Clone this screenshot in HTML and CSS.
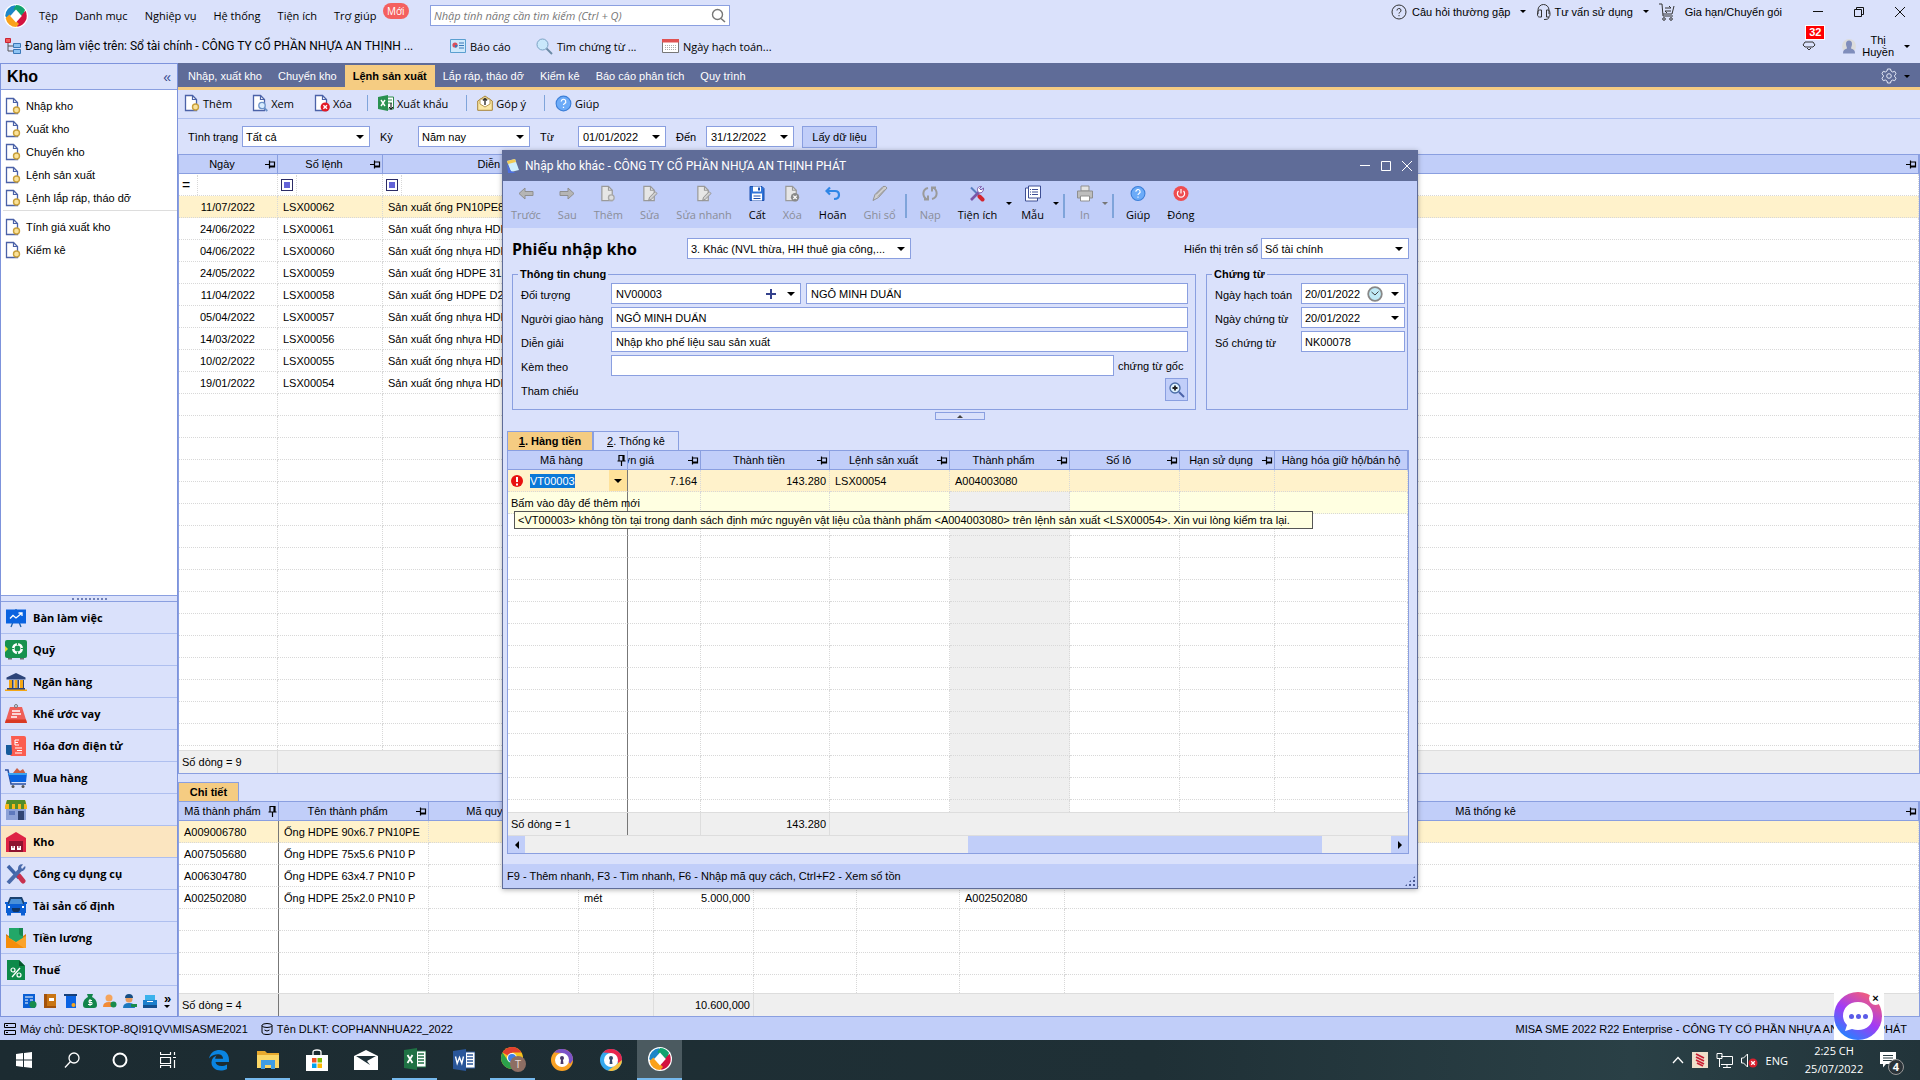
FILE: index.html
```
<!DOCTYPE html>
<html lang="vi">
<head>
    <meta charset="utf-8">
    <title>MISA SME 2022</title>
    <link rel="stylesheet" href="styles.css">
</head>
<body>

<!-- shared icons -->
<svg class="defs" width="0" height="0">
    <symbol id="doc" viewBox="0 0 16 18">
        <path d="M1.5 1.5h7l4 4v11h-11z" fill="#fff" stroke="#4b62a8" stroke-width="1.3"/>
        <path d="M8.5 1.5v4h4" fill="none" stroke="#4b62a8" stroke-width="1.2"/>
    </symbol>
    <symbol id="doc-new" viewBox="0 0 16 18">
        <use href="#doc" width="16" height="18"/>
        <circle cx="11.5" cy="13" r="3" fill="#fbe39a" stroke="#c9a03c" stroke-width="1.4"/>
    </symbol>
    <symbol id="doc-view" viewBox="0 0 16 18">
        <use href="#doc" width="16" height="18"/>
        <circle cx="10" cy="11.5" r="3.2" fill="#d8ecff" stroke="#6d93c9" stroke-width="1.3"/>
        <path d="M12.3 14l3 3" stroke="#6d93c9" stroke-width="1.8"/>
    </symbol>
    <symbol id="doc-del" viewBox="0 0 16 18">
        <use href="#doc" width="16" height="18"/>
        <circle cx="11.2" cy="13" r="4.6" fill="#e21a26"/>
        <path d="M9.4 11.2l3.6 3.6m0-3.6l-3.6 3.6" stroke="#fff" stroke-width="1.4"/>
    </symbol>
    <symbol id="gdoc" viewBox="0 0 16 18">
        <path d="M1.5 1.5h7l4 4v11h-11z" fill="#e6e6e6" stroke="#9a9a9a" stroke-width="1.3"/>
        <path d="M8.5 1.5v4h4" fill="none" stroke="#9a9a9a" stroke-width="1.2"/>
    </symbol>
    <symbol id="gdoc-new" viewBox="0 0 16 18">
        <use href="#gdoc" width="16" height="18"/>
        <circle cx="11.5" cy="13.4" r="3" fill="#ddd" stroke="#a8a8a8" stroke-width="1.4"/>
    </symbol>
    <symbol id="gdoc-edit" viewBox="0 0 16 18">
        <use href="#gdoc" width="16" height="18"/>
        <path d="M6.5 16.5l1-3.5 6-6 2 2-6 6z" fill="#d0d0d0" stroke="#909090"/>
    </symbol>
    <symbol id="gdoc-del" viewBox="0 0 16 18">
        <use href="#gdoc" width="16" height="18"/>
        <circle cx="11.2" cy="13" r="4.4" fill="#8a8a8a"/>
        <path d="M9.4 11.2l3.6 3.6m0-3.6l-3.6 3.6" stroke="#fff" stroke-width="1.3"/>
    </symbol>
    <symbol id="pin" viewBox="0 0 11 9">
        <path d="M0 4.5h4M4.5 0.5v8M4.5 2h5v5h-5M4.5 6h5" fill="none" stroke="#000" stroke-width="1.2"/>
    </symbol>
    <symbol id="pin-on" viewBox="0 0 9 12">
        <path d="M4.5 12V7M0.5 7h8M2 7V1.5h5V7M6 1.5V7" fill="none" stroke="#000" stroke-width="1.2"/>
    </symbol>
    <symbol id="help" viewBox="0 0 18 18">
        <circle cx="9" cy="9" r="7.8" fill="#6cabf8" stroke="#3c7fd8" stroke-width="1.2"/>
        <path d="M6.6 7a2.4 2.4 0 1 1 3.6 2c-.9.5-1.2.8-1.2 1.7M9 12.4v1.3" fill="none" stroke="#fff" stroke-width="1.3"/>
    </symbol>
    <symbol id="misa" viewBox="0 0 24 24">
        <circle cx="12" cy="12" r="12" fill="#fff"/>
        <path d="M11 1.2A11 11 0 0 0 1.2 12l3.6 4.6L14 5z" fill="#1d86c8"/>
        <path d="M12 1a11 11 0 0 1 9 4.8L18.5 14 9.5 5z" fill="#12a36f"/>
        <path d="M21.5 6.8a11 11 0 0 1-8 16L10.5 19z" fill="#d3123f"/>
        <path d="M1.6 14a11 11 0 0 0 10.600 9L15 20 5.500 10.500z" fill="#f9a11b"/>
        <path d="M12 5.500L17.800 12 12 18.500 6.200 12z" fill="#fff"/>
    </symbol>
</svg>

<div class="desktop">

<header class="app-header">
    <div class="menu-row">
        <svg class="logo" viewBox="0 0 24 24"><use href="#misa"/></svg>
        <nav class="menu">
            <a href="#">Tệp</a>
            <a href="#">Danh mục</a>
            <a href="#">Nghiệp vụ</a>
            <a href="#">Hệ thống</a>
            <a href="#">Tiện ích</a>
            <a href="#">Trợ giúp<span class="new-badge">Mới</span></a>
        </nav>
        <div class="search">
            <input type="text" aria-label="Tìm kiếm" placeholder="Nhập tính năng cần tìm kiếm (Ctrl + Q)">
            <svg width="15" height="15" viewBox="0 0 15 15"><circle cx="6.500" cy="6.500" r="5" fill="none" stroke="#777" stroke-width="1.400"/><path d="M10 10.500l4 3.500" stroke="#777" stroke-width="1.600"/></svg>
        </div>
        <div class="header-right">
            <a href="#"><svg width="16" height="16" viewBox="0 0 16 16" fill="none" stroke="#333"><circle cx="8" cy="8" r="7"/><path d="M6 6.500a2 2 0 1 1 2.800 1.800c-.6.300-.8.600-.8 1.300M8 11v1.200"/></svg> Câu hỏi thường gặp</a>
            <i class="caret"></i>
            <a href="#" class="support"><svg width="16" height="16" viewBox="0 0 16 16" fill="none" stroke="#333"><path d="M2 10V6a5 5 0 0 1 11 0v4M5.500 6v7h-2c-1.500 0-2-1-2-3s.5-4 2-4zM10.500 6v7h1.500c1.500 0 2-1 2-3s-.5-4-2-4zM13 13c0 2-2 2.500-5 2.500"/></svg>Tư vấn sử dụng</a>
            <i class="caret"></i>
            <a href="#" class="cart"><svg width="16" height="18" viewBox="0 0 16 18" fill="none" stroke="#333"><path d="M0 1h3l1 12h10M4 11h9l2-8M6 5h6M6 8h6M10 3l2 2M8 10L6 8"/><circle cx="5" cy="16" r="1.300"/><circle cx="12" cy="16" r="1.300"/></svg>Gia hạn/Chuyển gói</a>
            <div class="win-btns">
                <button aria-label="Thu nhỏ"><svg width="12" height="12" stroke="#111" fill="none"><path d="M1 5.500h10"/></svg></button>
                <button aria-label="Khôi phục"><svg width="12" height="12" stroke="#111" fill="none"><path d="M1.500 3.500h7v7h-7zM3.500 3V1.500h7v7H9"/></svg></button>
                <button aria-label="Đóng"><svg width="12" height="12" stroke="#111" fill="none"><path d="M1 1l10 10M11 1L1 11"/></svg></button>
            </div>
        </div>
    </div>
    <div class="quick-row">
        <div class="working">
            <svg width="16" height="16" viewBox="0 0 16 16"><path d="M3 5v8h5M3 8h5" fill="none" stroke="#555"/><path d="M.5.500h5v4h-5z" fill="#ef5a5a" stroke="#c23"/><path d="M8.500 5.500h7v4h-7zM8.500 11.500h7v4h-7z" fill="#8fc4f3" stroke="#3b78b8"/></svg>
            Đang làm việc trên: Sổ tài chính - CÔNG TY CỔ PHẦN NHỰA AN THỊNH ...
        </div>
        <a href="#" class="q1"><svg width="16" height="16" viewBox="0 0 16 16"><path d="M.5 1.500h15v13H.5z" fill="#cfe8fb" stroke="#5a9fd0"/><circle cx="5" cy="7" r="2.600" fill="#d84f5c"/><path d="M5 7h2.600A2.600 2.600 0 0 1 5 9.600z" fill="#3b78b8"/><path d="M9 5h5M9 7.500h5M9 10h5" stroke="#3b78b8"/></svg>Báo cáo</a>
        <a href="#" class="q2"><svg width="17" height="17" viewBox="0 0 17 17"><circle cx="6.500" cy="6.500" r="5.500" fill="#c9e8fb" stroke="#7ba2c4"/><path d="M10.500 10.500l5.500 5.500" stroke="#6c8ba6" stroke-width="2"/></svg>Tìm chứng từ ...</a>
        <a href="#" class="q3"><svg width="17" height="16" viewBox="0 0 17 16"><path d="M.5 1.500h16v13H.5z" fill="#fff" stroke="#777"/><path d="M0 1h17v3.500H0z" fill="#e05252"/><path d="M3 7.500h11M3 9.500h11M3 11.500h11" stroke="#aaa" stroke-dasharray="1 1"/></svg>Ngày hạch toán...</a>
        <div class="user">
            <div class="bell">
                <span class="bell-count">32</span>
                <svg width="14" height="14" viewBox="0 0 14 14" fill="none" stroke="#333"><path d="M1 6l2-3h8l2 3-2 2H3zM5 9l2 2 2-2"/></svg>
            </div>
            <svg width="14" height="17" viewBox="0 0 14 17"><circle cx="7" cy="8" r="7" fill="#dcdcdc"/><path d="M4 6a3 3.500 0 0 1 6 0c0 2-1 3-1 4.500 3 1 4 2 4 5H1c0-3 1-4 4-5C5 9 4 8 4 6z" fill="#7f8dbb"/></svg>
            <span class="user-name">Thị<br>Huyền</span>
            <i class="caret"></i>
        </div>
    </div>
</header>

<div class="workspace">
    <aside class="sidebar">
        <div class="side-title"><h2>Kho</h2><button aria-label="Thu gọn">«</button></div>
        <div class="side-links">
            <a href="#"><svg width="16" height="18"><use href="#doc-new"/></svg>Nhập kho</a>
            <a href="#"><svg width="16" height="18"><use href="#doc-new"/></svg>Xuất kho</a>
            <a href="#"><svg width="16" height="18"><use href="#doc-new"/></svg>Chuyển kho</a>
            <a href="#"><svg width="16" height="18"><use href="#doc-new"/></svg>Lệnh sản xuất</a>
            <a href="#"><svg width="16" height="18"><use href="#doc-new"/></svg>Lệnh lắp ráp, tháo dỡ</a>
            <hr>
            <a href="#"><svg width="16" height="18"><use href="#doc-new"/></svg>Tính giá xuất kho</a>
            <a href="#"><svg width="16" height="18"><use href="#doc-new"/></svg>Kiểm kê</a>
        </div>
        <div class="splitter"><i></i></div>
        <nav class="modules">
            <a href="#"><svg viewBox="0 0 22 20"><path d="M8 14l-2 5M14 14l2 5M11 1v2" stroke="#1e5fa8" stroke-width="1.300"/><path d="M1 1.500h20v14H1z" fill="#0a63e0"/><path d="M5 10.500l3-3 3 2.500 6-5M13.500 5H17v3" fill="none" stroke="#fff" stroke-width="1.300"/></svg>Bàn làm việc</a>
            <a href="#"><svg viewBox="0 0 22 20"><path d="M3 17h4v2.500H3zM15 17h4v2.500h-4z" fill="#68716d"/><rect width="22" height="18" rx="2" fill="#17924f"/><path d="M0 6l3 3-3 3z" fill="#e8e339"/><circle cx="12.500" cy="8.500" r="4.200" fill="none" stroke="#fff" stroke-width="2.600"/><path d="M12.500 2v3M12.500 12v3M6 8.500h3M16 8.500h3" stroke="#17924f" stroke-width="1.200"/></svg>Quỹ</a>
            <a href="#"><svg viewBox="0 0 22 20"><path d="M11 1l9.500 4.500v2h-19v-2z" fill="#2c4479"/><path d="M4 8h3v9H4zM9.500 8h3v9h-3zM15 8h3v9h-3z" fill="#f5a714"/><path d="M7 8h1.500v9H7zM12.500 8H14v9h-1.500zM18 8h1v9h-1zM2 16h18v2H2z" fill="#2c4479"/><path d="M0 17.500h22V19H0z" fill="#f5a714"/></svg>Ngân hàng</a>
            <a href="#"><svg viewBox="0 0 22 20"><path d="M5 3h12l5 16H0z" fill="#ef5f59"/><path d="M1 15.500h20l1 3.500H0z" fill="#d93a24"/><circle cx="11" cy="2" r="1.500" fill="none" stroke="#777"/><path d="M7 7h8M7 10h9M6 13h6" stroke="#fff" stroke-width="1.700"/></svg>Khế ước vay</a>
            <a href="#"><svg viewBox="0 0 22 20"><path d="M1 9h6v10H3q-2 0-2-2z" fill="#165c9c"/><path d="M6 0h13q2 0 2 2v18H5q2-1 2-3z" fill="#fb5d4f"/><path d="M10 4h4M10 4v5M10 6.500h3M10 9h4M10 12h7M12 14.500h5M10 17h7" stroke="#fff"/></svg>Hóa đơn điện tử</a>
            <a href="#"><svg viewBox="0 0 22 20"><path d="M8 5l4-5 3 3 3-2 3 5z" fill="#ca6045"/><path d="M0 2h3l3 14h15" fill="none" stroke="#294fa0" stroke-width="1.500"/><path d="M3 5h19l-1 9H6z" fill="#0a63e0"/><path d="M3 5h19v2H4z" fill="#3ba3ee"/><circle cx="8" cy="18.500" r="1.500" fill="#555"/><circle cx="18" cy="18.500" r="1.500" fill="#555"/></svg>Mua hàng</a>
            <a href="#"><svg viewBox="0 0 22 20"><path d="M1 8h20v12H1z" fill="#8da2d7"/><path d="M13 11h6v9h-6z" fill="#304472"/><path d="M4 11h6v4H4z" fill="#5e79bd"/><path d="M2 0h18l2 6v3H0V6z" fill="#f6b61c"/><path d="M2 0h18l1 4H1z" fill="#538d28"/><path d="M4 4h3v5H4zM10 4h3v5h-3zM16 4h3v5h-3z" fill="#538d28"/></svg>Bán hàng</a>
            <a href="#" class="on"><svg viewBox="0 0 22 20"><path d="M11 0l10 6v14H1V6z" fill="#de2345"/><path d="M4 9h14v11H4z" fill="#8d132f"/><path d="M6 14h4v4H6zM12 14h4v4h-4z" fill="#fff"/><path d="M7.500 14h1v2h-1zM13.500 14h1v2h-1z" fill="#8d132f"/></svg>Kho</a>
            <a href="#"><svg viewBox="0 0 22 20"><path d="M3 2l11 12" stroke="#3f63a8" stroke-width="3.500"/><path d="M14 12l4 5" stroke="#c8304e" stroke-width="5" stroke-linecap="round"/><path d="M3 19L16 5" stroke="#4a6bab" stroke-width="4"/><path d="M20 2l-3 3-1-2 2-2.500c-4-1-6 3-4.500 5.500 2 2.500 7 1 7-3z" fill="#4a6bab"/></svg>Công cụ dụng cụ</a>
            <a href="#"><svg viewBox="0 0 22 20"><path d="M5 1h12l3 7H2z" fill="#1b416f"/><path d="M6 3h10l2 5H4z" fill="#4a90d8"/><path d="M1 8h20v9H1zM2 17h4v2.500H2zM16 17h4v2.500h-4z" fill="#0b5fd4"/><path d="M7 12h8v2q-1 2-2 2H9q-1 0-2-2z" fill="#123563"/><path d="M0 6h3v2H0zM19 6h3v2h-3z" fill="#0b5fd4"/><path d="M3 11h2M17 11h2" stroke="#fff" stroke-width="2"/></svg>Tài sản cố định</a>
            <a href="#"><svg viewBox="0 0 22 20"><path d="M1 6l10 7 10-7v14H1z" fill="#d77b12"/><path d="M4 0h14v11l-7 4-7-4z" fill="#22a768"/><path d="M14 0h4v8q-4 0-4-3z" fill="#17874f"/><path d="M1 20V8l10 6 10-6v12z" fill="#fba32b"/><path d="M1 8l18 12H1z" fill="#f58d0a"/></svg>Tiền lương</a>
            <a href="#"><svg viewBox="0 0 22 20"><path d="M2 0h12l6 6v14H2z" fill="#0d8a49"/><path d="M14 0v6h6z" fill="#06582d"/><path d="M7 17l8-9" stroke="#fff" stroke-width="1.300"/><circle cx="8" cy="10" r="2" fill="none" stroke="#fff" stroke-width="1.200"/><circle cx="14" cy="15" r="2" fill="none" stroke="#fff" stroke-width="1.200"/></svg>Thuế</a>
        </nav>
        <div class="module-tray">
            <svg viewBox="0 0 14 14"><path d="M0 0h12v14H0z" fill="#0b5fd4"/><path d="M2 3h8M2 6h3M7 6h3M2 9h3" stroke="#fff"/><circle cx="10" cy="10.500" r="3.500" fill="#188c4c"/></svg>
            <svg viewBox="0 0 14 14"><path d="M1 0h12v14H1z" fill="#a3520d"/><path d="M4 0h9v12H4z" fill="#c97514"/><path d="M6 4h5v3H6z" fill="#fff"/></svg>
            <svg viewBox="0 0 14 14"><path d="M1 0h13v2H1z" fill="#163f7a"/><path d="M3 2h10v12H3z" fill="#0b63e3"/><circle cx="10.500" cy="11" r="2" fill="#f8a61e"/></svg>
            <svg viewBox="0 0 14 14"><path d="M4 0h6L9 3c4 2 5 5 5 8q0 3-3 3H3q-3 0-3-3c0-3 1-6 5-8z" fill="#12854b"/><path d="M9 6.500H6v2h3v2H5M7 5v7" fill="none" stroke="#fff"/></svg>
            <svg viewBox="0 0 14 14"><circle cx="6" cy="4" r="3.500" fill="#f5a45b"/><path d="M0 13q0-5 6-5t6 5z" fill="#f28a35"/><circle cx="10.500" cy="10.500" r="3" fill="#188c4c"/></svg>
            <svg viewBox="0 0 14 14"><circle cx="6" cy="5" r="3.500" fill="#e99b5c"/><path d="M2 4q0-4 4-4t4 4z" fill="#174f86"/><path d="M0 14q0-5 6-5t6 5z" fill="#1d78be"/><path d="M8 10h6v3H8z" fill="#188c4c"/></svg>
            <svg viewBox="0 0 14 14"><path d="M2 1h10v6H2z" fill="#3cb2ec"/><path d="M0 6h14v5H0z" fill="#1c7ecb"/><path d="M0 11h14v3H0z" fill="#134f8f"/><path d="M4 7.500h6" stroke="#fff"/></svg>
            <span class="more">»<i class="caret"></i></span>
        </div>
    </aside>

    <main class="content">
        <nav class="tabs">
            <a href="#">Nhập, xuất kho</a>
            <a href="#">Chuyển kho</a>
            <a href="#" class="active">Lệnh sản xuất</a>
            <a href="#">Lắp ráp, tháo dỡ</a>
            <a href="#">Kiểm kê</a>
            <a href="#">Báo cáo phân tích</a>
            <a href="#">Quy trình</a>
            <button class="gear" aria-label="Tùy chọn"><svg width="16" height="16" viewBox="0 0 16 16" fill="none" stroke="#e4e8f6"><path d="M6.500 1h3l.5 2 1.700 1 2-.700 1.400 2.500L13.700 7.200v1.600l1.400 1.400-1.400 2.500-2-.700-1.700 1-.5 2h-3L6 13l-1.700-1-2 .700L.9 10.200l1.400-1.400V7.200L.9 5.800l1.400-2.500 2 .700L6 3z"/><circle cx="8" cy="8" r="2.300"/></svg><i class="caret"></i></button>
        </nav>
        <div class="toolbar">
            <button><svg width="16" height="18"><use href="#doc-new"/></svg>Thêm</button>
            <button><svg width="16" height="18"><use href="#doc-view"/></svg>Xem</button>
            <button><svg width="16" height="18"><use href="#doc-del"/></svg>Xóa</button>
            <i class="sep"></i>
            <button><svg width="16" height="16" viewBox="0 0 16 16"><path d="M8 2h7.500v12H8z" fill="#fff" stroke="#2c8a4c"/><path d="M10 5h4M10 8h4" stroke="#2c8a4c"/><path d="M0 2l10-2v16L0 14z" fill="#2a9150"/><path d="M3 5l4 6M7 5l-4 6" stroke="#fff" stroke-width="1.400"/><path d="M13 8v6m-2-2l2 2.500 2-2.500" fill="none" stroke="#000"/></svg>Xuất khẩu</button>
            <i class="sep"></i>
            <button><svg width="16" height="16" viewBox="0 0 16 16"><path d="M.7 6L8 1l7.300 5v9.300H.7z" fill="#fbe8a6" stroke="#a8853b"/><path d="M3 4h10v5l-5 3-5-3z" fill="#fff" stroke="#b99b55"/><path d="M8 10V3.500M6 5.500l2-2 2 2" fill="none" stroke="#333" stroke-width="1.400"/></svg>Góp ý</button>
            <i class="sep"></i>
            <button><svg width="17" height="17"><use href="#help"/></svg>Giúp</button>
        </div>
        <form class="filters">
            <label class="f-status" for="status">Tình trạng</label>
            <span class="field sel w-status"><select id="status"><option>Tất cả</option></select></span>
            <label class="f-period" for="period">Kỳ</label>
            <span class="field sel w-period"><select id="period"><option>Năm nay</option></select></span>
            <label class="f-from" for="from">Từ</label>
            <span class="field sel w-date"><input id="from" type="text" value="01/01/2022"></span>
            <label class="f-to" for="to">Đến</label>
            <span class="field sel w-date"><input id="to" type="text" value="31/12/2022"></span>
            <button type="button" class="load">Lấy dữ liệu</button>
        </form>

        <section class="grid master">
            <div class="grid-rows">
                <table data-fill="25">
                    <colgroup><col class="c99"><col class="c105"><col class="c245"><col></colgroup>
                    <thead><tr>
                        <th><span class="th">Ngày<svg width="11" height="9"><use href="#pin"/></svg></span></th>
                        <th><span class="th">Số lệnh<svg width="11" height="9"><use href="#pin"/></svg></span></th>
                        <th><span class="th">Diễn giải<svg width="11" height="9"><use href="#pin"/></svg></span></th>
                        <th><span class="th"><svg width="11" height="9"><use href="#pin"/></svg></span></th>
                    </tr></thead>
                    <tbody>
                        <tr class="filter-row"><td><i class="op eq">=</i></td><td><i class="op"><b></b></i></td><td><i class="op"><b></b></i></td><td></td></tr>
                        <tr class="selected"><td class="date">11/07/2022</td><td>LSX00062</td><td>Sản xuất ống PN10PE80</td><td></td></tr>
                        <tr><td class="date">24/06/2022</td><td>LSX00061</td><td>Sản xuất ống nhựa HDPE</td><td></td></tr>
                        <tr><td class="date">04/06/2022</td><td>LSX00060</td><td>Sản xuất ống nhựa HDPE</td><td></td></tr>
                        <tr><td class="date">24/05/2022</td><td>LSX00059</td><td>Sản xuất ống HDPE 315</td><td></td></tr>
                        <tr><td class="date">11/04/2022</td><td>LSX00058</td><td>Sản xuất ống HDPE D25</td><td></td></tr>
                        <tr><td class="date">05/04/2022</td><td>LSX00057</td><td>Sản xuất ống nhựa HDPE</td><td></td></tr>
                        <tr><td class="date">14/03/2022</td><td>LSX00056</td><td>Sản xuất ống nhựa HDPE</td><td></td></tr>
                        <tr><td class="date">10/02/2022</td><td>LSX00055</td><td>Sản xuất ống nhựa HDPE</td><td></td></tr>
                        <tr><td class="date">19/01/2022</td><td>LSX00054</td><td>Sản xuất ống nhựa HDPE</td><td></td></tr>
                    </tbody>
                </table>
            </div>
            <div class="grid-foot"><span class="c99">Số dòng = 9</span><span></span></div>
        </section>

        <section class="detail">
            <div class="detail-tabs"><button>Chi tiết</button></div>
            <div class="grid">
                <div class="grid-rows">
                    <table class="frozen" data-fill="8">
                        <colgroup><col class="c100"><col class="c150"><col class="c150"><col class="c75"><col class="c100"><col class="c103"><col class="c103"><col class="c105"><col></colgroup>
                        <thead><tr>
                            <th><span class="th">Mã thành phẩm<svg width="9" height="12"><use href="#pin-on"/></svg></span></th>
                            <th><span class="th">Tên thành phẩm<svg width="11" height="9"><use href="#pin"/></svg></span></th>
                            <th><span class="th">Mã quy cách<svg width="11" height="9"><use href="#pin"/></svg></span></th>
                            <th></th><th></th><th></th><th></th><th></th>
                            <th><span class="th">Mã thống kê<svg width="11" height="9"><use href="#pin"/></svg></span></th>
                        </tr></thead>
                        <tbody>
                            <tr class="selected"><td>A009006780</td><td>Ống HDPE 90x6.7 PN10PE</td><td></td><td></td><td></td><td></td><td></td><td></td><td></td></tr>
                            <tr><td>A007505680</td><td>Ống HDPE 75x5.6 PN10 P</td><td></td><td></td><td></td><td></td><td></td><td></td><td></td></tr>
                            <tr><td>A006304780</td><td>Ống HDPE 63x4.7 PN10 P</td><td></td><td></td><td></td><td></td><td></td><td></td><td></td></tr>
                            <tr><td>A002502080</td><td>Ống HDPE 25x2.0 PN10 P</td><td></td><td>mét</td><td class="num">5.000,000</td><td></td><td></td><td>A002502080</td><td></td></tr>
                        </tbody>
                    </table>
                </div>
                <div class="grid-foot"><span class="c100 frozen-edge">Số dòng = 4</span><span class="c375"></span><span class="c100 num">10.600,000</span><span></span></div>
            </div>
        </section>
    </main>
</div>

<footer class="statusbar">
    <svg width="12" height="12" fill="none" stroke="#000"><path d="M.5.500h11v4H.5zM.5 7.500h11v4H.5zM2 2.500h2M2 9.500h2"/></svg>
    <span>Máy chủ: DESKTOP-8QI91QV\MISASME2021</span>
    <svg class="db" width="12" height="12" fill="none" stroke="#000"><ellipse cx="6" cy="2.500" rx="5" ry="2"/><path d="M1 2.500V9q0 2.500 5 2.500T11 9V2.500M3.500 7q2.500 2 5 0"/></svg>
    <span>Tên DLKT: COPHANNHUA22_2022</span>
    <span class="edition">MISA SME 2022 R22 Enterprise - CÔNG TY CỔ PHẦN NHỰA AN THỊNH PHÁT</span>
</footer>

<div class="taskbar">
    <div class="tasks">
        <button aria-label="Start"><svg width="16" height="16" fill="#fff"><path d="M0 2l7-1v6.500H0zM8 1l8-1v7.500H8zM0 8.500h7V15l-7-1zM8 8.500h8V16l-8-1z"/></svg></button>
        <button aria-label="Search"><svg width="16" height="16" fill="none" stroke="#fff" stroke-width="1.300"><circle cx="10" cy="6" r="5"/><path d="M6.500 9.500L1 15.500"/></svg></button>
        <button aria-label="Cortana"><svg width="16" height="16" fill="none" stroke="#fff" stroke-width="2"><circle cx="8" cy="8" r="6.500"/></svg></button>
        <button aria-label="Task view"><svg width="17" height="16" fill="none" stroke="#fff"><path d="M.5 0v2.500h10V0M.5 5.500h10v6H.500zM.5 16v-2.500h10V16M14.500 0v3M14.500 8v8M13 5.500h3" stroke-width="1.200"/></svg></button>
        <button aria-label="Edge" class="wide"><svg width="22" height="22" viewBox="0 0 22 22"><path d="M1 9.500C2.500 3 7 1 11.500 1 17.500 1 21 5 21 11v2H7.500c.5 4 6.500 5.500 11.500 2.500v4.500C11 24 3 20 3.500 13 3.700 9.500 6 7.500 8.500 6.500 7.500 8 7.300 8.800 7.200 9.700H15c0-6-9.500-5.500-14-.2z" fill="#0a84e0"/></svg></button>
        <button aria-label="Explorer" class="wide open"><svg width="22" height="19" viewBox="0 0 22 19"><path d="M0 1h8l2 2h12v15H0z" fill="#e8a92e"/><path d="M0 5h22v13H0z" fill="#fbd767"/><path d="M4 10h14v9h-4v-4H8v4H4z" fill="#3f9de4"/></svg></button>
        <button aria-label="Store" class="wide"><svg width="24" height="22" viewBox="0 0 24 22"><path d="M8 7V3q0-2 4-2t4 2v4" fill="none" stroke="#fff" stroke-width="1.300"/><path d="M1 6h22v16H1z" fill="#fff"/><path d="M7 9h4.500v4.500H7z" fill="#f05024"/><path d="M12.500 9H17v4.500h-4.500z" fill="#7fb900"/><path d="M7 14.500h4.500V19H7z" fill="#00a3ee"/><path d="M12.500 14.500H17V19h-4.500z" fill="#feb800"/></svg></button>
        <button aria-label="Mail" class="wide"><svg width="24" height="20" viewBox="0 0 24 20"><path d="M0 6l12-6 12 6v14H0z" fill="#fff"/><path d="M2 6h20l-9 5 3 4z" fill="#1f3138"/></svg></button>
        <button aria-label="Excel" class="wide open"><svg width="22" height="22" viewBox="0 0 22 22"><path d="M12 3h10v16H12z" fill="#fff" stroke="#1f7244"/><path d="M14 6h6M14 9h6M14 12h6M14 15h6" stroke="#1f7244" stroke-width="1.500"/><path d="M0 2l13-2v22L0 20z" fill="#1f7244"/><path d="M3.500 7l5 8M8.500 7l-5 8" stroke="#fff" stroke-width="1.800"/></svg></button>
        <button aria-label="Word" class="wide"><svg width="22" height="22" viewBox="0 0 22 22"><path d="M12 3h10v16H12z" fill="#fff" stroke="#2a5699"/><path d="M14 6h6M14 9h6M14 12h6M14 15h6" stroke="#2a5699" stroke-width="1.500"/><path d="M0 2l13-2v22L0 20z" fill="#2a5699"/><path d="M2.500 7.500l1.700 7 2.300-6 2.300 6 1.700-7" fill="none" stroke="#fff" stroke-width="1.400"/></svg></button>
        <button aria-label="Chrome" class="wide open"><svg width="26" height="26" viewBox="0 0 26 26"><circle cx="12" cy="12" r="11" fill="#f6c21c"/><path d="M12 12L2.500 6.500A11 11 0 0 1 21.500 6.500H12z" fill="#e2402f"/><path d="M2.500 6.500A11 11 0 0 0 12 23l4-8-8.500-1z" fill="#2ba24c"/><circle cx="12" cy="12" r="5" fill="#fff"/><circle cx="12" cy="12" r="4" fill="#3e7fe8"/><circle cx="18" cy="18" r="8" fill="#8d6e63"/><text x="18" y="22" font-size="11" text-anchor="middle" fill="#e8dcd8">T</text></svg></button>
        <button aria-label="Coc Coc" class="wide"><svg width="22" height="22" viewBox="0 0 22 22"><circle cx="11" cy="11" r="11" fill="#f9a224"/><path d="M3 3.500A11 11 0 0 1 22 11l-3 4L11 4z" fill="#7b53c8"/><circle cx="11" cy="11" r="7" fill="#fff"/><path d="M9 9a2 2 0 1 1 4 0q0 1-1 2l.5 4h-3l.5-4q-1-1-1-2z" fill="#4a3a6b"/></svg></button>
        <button aria-label="Browser" class="wide"><svg width="22" height="22" viewBox="0 0 22 22"><circle cx="11" cy="11" r="11" fill="#34a8ee"/><path d="M3 3.500A11 11 0 0 1 22 11l-3 4L11 4z" fill="#e8274c"/><path d="M22 11a11 11 0 0 1-14 10.500L17 15z" fill="#f9c03c"/><circle cx="11" cy="11" r="7" fill="#fff"/><path d="M9 9a2 2 0 1 1 4 0q0 1-1 2l.5 4h-3l.5-4q-1-1-1-2z" fill="#33486b"/></svg></button>
        <button aria-label="MISA" class="wide open current"><svg width="24" height="24"><use href="#misa"/></svg></button>
    </div>
    <div class="tray">
        <svg width="12" height="8" fill="none" stroke="#fff" stroke-width="1.300"><path d="M1 7l5-5.500L11 7"/></svg>
        <svg width="16" height="16"><path d="M0 0h16v16H0z" fill="#f0dfcb"/><path d="M4 2l8 4M4 5l8 4M4 8l8 4M5 11l6 3" stroke="#c81e34" stroke-width="1.800"/></svg>
        <svg width="17" height="15" fill="none" stroke="#fff"><path d="M5 3.500h11.500v8H5M3.500 7v7M1 .5h5v5H1zM3.500 5.500v1.500M7 14.500h8M11 12v2"/></svg>
        <svg width="17" height="15" viewBox="0 0 17 15"><path d="M.5 5h2l4-4v13l-4-4h-2z" fill="none" stroke="#fff"/><circle cx="12" cy="10" r="4.500" fill="#d9202e"/><path d="M10.200 8.200l3.600 3.600m0-3.600l-3.600 3.600" stroke="#fff" stroke-width="1.300"/></svg>
        <span class="lang">ENG</span>
        <span class="clock">2:25 CH<br>25/07/2022</span>
        <div class="notif">
            <svg width="16" height="16"><path d="M0 0h16v12H6l-3 3.500V12H0z" fill="#fff"/><path d="M3 3.500h10M3 6h10M3 8.500h10" stroke="#263a40"/></svg>
            <span>4</span>
        </div>
    </div>
</div>

<!-- chat bubble -->
<div class="chat">
    <svg width="48" height="48" viewBox="0 0 48 48">
        <defs><linearGradient id="cg" x1="0.200" y1="1" x2="0.800" y2="0"><stop offset="0" stop-color="#168bff"/><stop offset=".5" stop-color="#a23af5"/><stop offset="1" stop-color="#ff6369"/></linearGradient></defs>
        <circle cx="24" cy="24" r="24" fill="url(#cg)"/>
        <path d="M24 10c9 0 15 6 15 14s-6 14-15 14q-3 0-6-1l-7 2 2-6q-4-4-4-9c0-8 6-14 15-14z" fill="#fff"/>
        <circle cx="17.500" cy="24.500" r="2.500" fill="#5a5be8"/><circle cx="24.500" cy="24.500" r="2.500" fill="#5a5be8"/><circle cx="31.500" cy="24.500" r="2.500" fill="#5a5be8"/>
    </svg>
    <button aria-label="Đóng">×</button>
</div>

<!-- voucher window -->
<div class="window">
    <div class="win-title">
        <svg width="16" height="16" viewBox="0 0 16 16"><path d="M2 3l8-2 4 11-8 2z" fill="#cfeefc"/><path d="M2 3l8-2 1 3-8 2z" fill="#f2cb55"/><path d="M2 6l1 9 8 0-5-2z" fill="#4d6fe0"/></svg>
        <span>Nhập kho khác - CÔNG TY CỔ PHẦN NHỰA AN THỊNH PHÁT</span>
        <div class="win-title-btns">
            <button aria-label="Thu nhỏ"><svg width="12" height="12" stroke="#fff" fill="none"><path d="M1 5.500h10"/></svg></button>
            <button aria-label="Phóng to"><svg width="12" height="12" stroke="#fff" fill="none"><path d="M1.500 1.500h9v9h-9z"/></svg></button>
            <button aria-label="Đóng"><svg width="12" height="12" stroke="#fff" fill="none"><path d="M1 1l10 10M11 1L1 11"/></svg></button>
        </div>
    </div>
    <div class="win-tools">
        <button disabled><svg viewBox="0 0 16 16"><path d="M1 8l6-5.500V6h8v4H7v3.500z" fill="#b5b5b5" stroke="#8f8f8f"/></svg>Trước</button>
        <button disabled><svg viewBox="0 0 16 16"><path d="M15 8L9 2.500V6H1v4h8v3.500z" fill="#b5b5b5" stroke="#8f8f8f"/></svg>Sau</button>
        <button disabled><svg><use href="#gdoc-new"/></svg>Thêm</button>
        <button disabled><svg><use href="#gdoc-edit"/></svg>Sửa</button>
        <button disabled><svg><use href="#gdoc-edit"/></svg>Sửa nhanh</button>
        <button><svg viewBox="0 0 16 16"><path d="M1 1h12l2 2v12H1z" fill="#2f74d8" stroke="#1b4fae"/><path d="M4 1h8v5H4zM3 8h10v7H3z" fill="#fff"/><path d="M9 2h2v3H9zM4.500 10h7v1h-7zM4.500 12.500h7v1h-7z" fill="#1b4fae"/></svg>Cất</button>
        <button disabled><svg><use href="#gdoc-del"/></svg>Xóa</button>
        <button><svg viewBox="0 0 16 16"><path d="M5 2L1.500 5.500 5 9M2 5.500h8q4 0 4 4t-5 4" fill="none" stroke="#2f86e6" stroke-width="2.200"/></svg>Hoãn</button>
        <button disabled><svg viewBox="0 0 16 16"><path d="M1 15l2-6 8-8q3-1 4 1.500L6.500 12z" fill="#cfcfcf" stroke="#949494"/><path d="M4 9l7-7M6 11l7-7" stroke="#949494"/></svg>Ghi sổ</button>
        <i class="sep"></i>
        <button disabled><svg viewBox="0 0 16 16" fill="none" stroke="#9a9a9a" stroke-width="2"><path d="M6 2.500C0 4 0 11 5 14M10 13.500C16 12 16 5 11 2M2 14h4v-4M14 2h-4v4"/></svg>Nạp</button>
        <button><svg viewBox="0 0 16 16"><path d="M2 2l8 8" stroke="#5b7fc0" stroke-width="2"/><path d="M2 14.500l8-8" stroke="#7a57a8" stroke-width="2.600"/><path d="M14.500 2.500L12 4.500 10.500 3l2-2c-3-.500-5 2-3.500 5s6 1 5.500-3.500z" fill="#fff" stroke="#7a57a8"/><path d="M10.500 11l3 3" stroke="#d3252f" stroke-width="4" stroke-linecap="round"/></svg>Tiện ích</button>
        <i class="caret"></i>
        <button><svg viewBox="0 0 16 16" stroke="#3e4f94"><path d="M.5 2.500h12v13H.5z" fill="#fff"/><path d="M3.500.500h12v12h-12z" fill="#fff"/><path d="M5 4h1M7 4h6M5 6.500h1M7 6.500h6M5 9h1M7 9h6" stroke-width="1"/></svg>Mẫu</button>
        <i class="caret"></i>
        <i class="sep tight"></i>
        <button disabled><svg viewBox="0 0 16 16" stroke="#8f8f8f"><path d="M4 .500h8v5H4z" fill="#e4e4e4"/><path d="M.5 5.500h15v7H.5z" fill="#bdbdbd"/><path d="M3.500 10.500h9v5h-9z" fill="#fff"/></svg>In</button>
        <i class="caret off"></i>
        <i class="sep tight"></i>
        <button><svg viewBox="0 0 18 18"><use href="#help"/></svg>Giúp</button>
        <button><svg viewBox="0 0 16 16"><circle cx="8" cy="8" r="7.500" fill="#ee4d50"/><path d="M5.500 5.500a3.600 3.600 0 1 0 5 0M8 3.500V8" fill="none" stroke="#fff" stroke-width="1.200"/></svg>Đóng</button>
    </div>

    <div class="win-body">
        <div class="voucher-head">
            <h1>Phiếu nhập kho</h1>
            <span class="field sel w-kind"><select aria-label="Loại phiếu"><option>3. Khác (NVL thừa, HH thuê gia công,...</option></select></span>
            <label class="push" for="book">Hiển thị trên sổ</label>
            <span class="field sel w-book"><select id="book"><option>Sổ tài chính</option></select></span>
        </div>
        <div class="groups">
            <fieldset class="general">
                <legend>Thông tin chung</legend>
                <div class="row">
                    <label for="obj">Đối tượng</label>
                    <span class="field sel w-obj"><input id="obj" type="text" value="NV00003"><button class="plus" aria-label="Thêm"></button></span>
                    <span class="field grow second"><input type="text" aria-label="Tên đối tượng" value="NGÔ MINH DUẨN"></span>
                </div>
                <div class="row">
                    <label for="person">Người giao hàng</label>
                    <span class="field grow"><input id="person" type="text" value="NGÔ MINH DUẨN"></span>
                </div>
                <div class="row">
                    <label for="desc">Diễn giải</label>
                    <span class="field grow"><input id="desc" type="text" value="Nhập kho phế liệu sau sản xuất"></span>
                </div>
                <div class="row">
                    <label for="attach">Kèm theo</label>
                    <span class="field grow"><input id="attach" type="text"></span>
                    <span class="suffix">chứng từ gốc</span>
                </div>
                <div class="row">
                    <span class="lbl">Tham chiếu</span>
                    <button class="lookup" aria-label="Chọn tham chiếu"><svg width="16" height="16"><circle cx="6" cy="6" r="5" fill="#dff2ff" stroke="#4b6ea8" stroke-width="1.300"/><path d="M6 3.500v5M3.500 6h5" stroke="#222" stroke-width="1.800"/><path d="M10 10l5 5" stroke="#4b62a8" stroke-width="2"/></svg></button>
                </div>
            </fieldset>
            <fieldset class="document">
                <legend>Chứng từ</legend>
                <div class="row"><label for="d1">Ngày hạch toán</label>
                    <span class="field sel grow"><input id="d1" type="text" value="20/01/2022"><svg class="clock-ic" width="16" height="16"><circle cx="8" cy="8" r="6.800" fill="#bfeaf6" stroke="#888" stroke-width="1.800"/><path d="M4.500 6L8 9l3.500-3.500" fill="none" stroke="#444"/></svg></span></div>
                <div class="row"><label for="d2">Ngày chứng từ</label><span class="field sel grow"><input id="d2" type="text" value="20/01/2022"></span></div>
                <div class="row"><label for="d3">Số chứng từ</label><span class="field grow"><input id="d3" type="text" value="NK00078"></span></div>
            </fieldset>
        </div>
        <button class="collapse" aria-label="Thu gọn"><i></i></button>

        <div class="win-tabs">
            <button class="active"><u>1</u>. Hàng tiền</button>
            <button><u>2</u>. Thống kê</button>
        </div>
        <div class="grid">
            <div class="grid-rows">
                <table class="frozen" data-fill="14" data-grey="4">
                    <colgroup><col class="c120"><col class="c73"><col class="c129"><col class="c120"><col class="c120"><col class="c110"><col class="c95"><col></colgroup>
                    <thead><tr>
                        <th><span class="th">Mã hàng<svg width="9" height="12"><use href="#pin-on"/></svg></span></th>
                        <th><span class="th cut">Đơn giá<svg width="11" height="9"><use href="#pin"/></svg></span></th>
                        <th><span class="th">Thành tiền<svg width="11" height="9"><use href="#pin"/></svg></span></th>
                        <th><span class="th">Lệnh sản xuất<svg width="11" height="9"><use href="#pin"/></svg></span></th>
                        <th><span class="th">Thành phẩm<svg width="11" height="9"><use href="#pin"/></svg></span></th>
                        <th><span class="th">Số lô<svg width="11" height="9"><use href="#pin"/></svg></span></th>
                        <th><span class="th">Hạn sử dụng<svg width="11" height="9"><use href="#pin"/></svg></span></th>
                        <th><span class="th full">Hàng hóa giữ hộ/bán hộ</span></th>
                    </tr></thead>
                    <tbody>
                        <tr class="selected">
                            <td class="editing"><div class="edit-cell">
                                <svg width="12" height="12"><circle cx="6" cy="6" r="6" fill="#e81010"/><path d="M6 2v5M6 8.500v2" stroke="#fff" stroke-width="2"/></svg>
                                <mark>VT00003</mark>
                                <button aria-label="Chọn mã hàng"><i class="caret"></i></button>
                            </div></td>
                            <td class="num">7.164</td><td class="num">143.280</td><td>LSX00054</td><td>A004003080</td><td></td><td></td><td></td>
                        </tr>
                        <tr class="new-row"><td class="hint">Bấm vào đây để thêm mới</td><td></td><td></td><td></td><td class="grey"></td><td></td><td></td><td></td></tr>
                    </tbody>
                </table>
                <div class="error-tip">&lt;VT00003&gt; không tồn tại trong danh sách định mức nguyên vật liệu của thành phẩm &lt;A004003080&gt; trên lệnh sản xuất &lt;LSX00054&gt;. Xin vui lòng kiểm tra lại.</div>
            </div>
            <div class="grid-foot"><span class="c120 frozen-edge">Số dòng = 1</span><span class="c73"></span><span class="c129 num">143.280</span><span></span></div>
            <div class="hscroll"><button class="left" aria-label="Trái"></button><div class="thumb"></div><button class="right" aria-label="Phải"></button></div>
        </div>
    </div>
    <div class="win-status">F9 - Thêm nhanh, F3 - Tìm nhanh, F6 - Nhập mã quy cách, Ctrl+F2 - Xem số tồn<i class="grip"></i></div>
</div>

</div>
<script src="script.js"></script>
</body>
</html>
```

FILE: styles.css
```
* {
    box-sizing: border-box;
}

body {
    margin: 0;
    font-family: "Liberation Sans", Arial, sans-serif;
    font-size: 11px;
    color: #000;
    background: #dae1fb;
}

a {
    color: inherit;
    text-decoration: none;
}

button, input, select {
    font: inherit;
    color: inherit;
    margin: 0;
    padding: 0;
    border: none;
    background: none;
}

svg {
    flex: none;
    display: block;
}

.defs {
    position: absolute;
}

.desktop {
    position: relative;
    display: flex;
    flex-direction: column;
    height: 100vh;
    overflow: hidden;
}

.caret {
    flex: none;
    border: 4px solid transparent;
    border-top-color: #000;
    border-bottom: none;
}

.caret.off {
    border-top-color: #777;
}

/* header */
.app-header {
    height: 63px;
}

.menu-row {
    display: flex;
    align-items: center;
    height: 31px;
    padding-left: 4px;
}

.logo {
    width: 24px;
    height: 24px;
}

.menu {
    display: flex;
    gap: 17px;
    margin-left: 11px;
    width: 391px;
    font-family: "Open Sans", sans-serif;
}

.menu a {
    position: relative;
}

.new-badge {
    position: absolute;
    left: 49px;
    top: -5px;
    padding: 0 4px;
    border-radius: 8px;
    background: #f4605f;
    color: #fff;
    font-size: 10px;
    line-height: 16px;
}

.search {
    display: flex;
    align-items: center;
    width: 300px;
    height: 21px;
    padding: 0 3px;
    border: 1px solid #8a9fe0;
    background: #fff;
}

.search input {
    flex: 1;
    min-width: 0;
    outline: none;
    font-style: italic;
    font-family: "Open Sans", sans-serif;
}

.search input::placeholder {
    color: #777;
}

.header-right {
    display: flex;
    align-items: center;
    margin-left: auto;
    padding: 0 14px 8px 0;
}

.header-right a {
    display: flex;
    align-items: center;
    gap: 5px;
    margin-left: 10px;
    white-space: nowrap;
}

.header-right > .caret {
    margin-left: 10px;
    border-width: 3px;
    border-bottom: none;
}

.header-right .support {
    gap: 2px;
}

.header-right .cart {
    gap: 10px;
}

.win-btns {
    display: flex;
    gap: 29px;
    margin-left: 30px;
}

.quick-row {
    display: flex;
    align-items: center;
    height: 30px;
    padding: 0 10px 0 5px;
    font-family: "Open Sans", sans-serif;
}

.quick-row a, .working {
    display: flex;
    align-items: center;
    gap: 4px;
    white-space: nowrap;
}

.working {
    width: 445px;
    font-family: Roboto, sans-serif;
    font-size: 12px;
}

.q1 { width: 86px; }
.q2 { width: 126px; }

.user {
    display: flex;
    align-items: center;
    margin-left: auto;
    font-family: "Liberation Sans", Arial, sans-serif;
}

.user .caret {
    border-width: 3px;
    border-bottom: none;
}

.bell {
    position: relative;
    margin-right: 26px;
}

.bell-count {
    position: absolute;
    left: 3px;
    top: -14px;
    padding: 0 3px;
    border: 1px solid #fff;
    background: #f00;
    color: #fff;
    font-weight: bold;
    line-height: 13px;
}

.user-name {
    margin: 0 10px 0 6px;
    text-align: center;
    line-height: 12px;
}

/* sidebar */
.workspace {
    flex: 1;
    display: flex;
    min-height: 0;
}

.sidebar {
    display: flex;
    flex-direction: column;
    width: 178px;
    border: 1px solid #7d93dc;
    background: #fff;
}

.side-title {
    display: flex;
    align-items: center;
    justify-content: space-between;
    height: 26px;
    padding: 0 6px;
    border-bottom: 1px solid #8a9fe0;
    background: #dae1fb;
}

.side-title h2 {
    margin: 0;
    font-size: 16px;
}

.side-title button {
    font-size: 14px;
    color: #35488c;
}

.side-links {
    flex: 1;
    padding-top: 4px;
}

.side-links a {
    display: flex;
    align-items: center;
    gap: 5px;
    height: 23px;
    padding-left: 4px;
}

.side-links hr {
    margin: 1px 0 4px 2px;
    border: none;
    border-top: 1px solid #ddd;
}

.splitter {
    display: flex;
    justify-content: center;
    align-items: center;
    height: 7px;
    border-top: 1px solid #8a9fe0;
    border-bottom: 1px solid #8a9fe0;
    background: #dae1fb;
}

.splitter i {
    width: 35px;
    border-top: 2px dotted #6f80b8;
}

.modules a {
    display: flex;
    align-items: center;
    gap: 6px;
    height: 32px;
    padding-left: 4px;
    border-bottom: 1px solid #aebfef;
    background: #dae1fb;
    font-family: "Open Sans", sans-serif;
    font-weight: bold;
}

.modules svg {
    width: 22px;
    height: 20px;
}

.modules a.on {
    background: #fbe5c0;
}

.module-tray {
    display: flex;
    align-items: center;
    gap: 6px;
    height: 30px;
    padding-left: 22px;
    background: #dae1fb;
}

.module-tray svg {
    width: 14px;
    height: 14px;
}

.more {
    margin-left: 1px;
    font-size: 13px;
    font-weight: bold;
    line-height: 8px;
}

.more .caret {
    display: block;
    width: 6px;
    margin-top: 2px;
    border-width: 3px;
    border-bottom: none;
}

/* content */
.content {
    flex: 1;
    display: flex;
    flex-direction: column;
    min-width: 0;
}

.tabs {
    display: flex;
    height: 27px;
    padding: 2px 10px 0 2px;
    border-bottom: 3px solid #f5cc82;
    background: #5f6c98;
    color: #fff;
}

.tabs a {
    padding: 0 8px;
    line-height: 23px;
    white-space: nowrap;
}

.tabs a.active {
    background: #f5cc82;
    color: #000;
    font-weight: bold;
}

.gear {
    display: flex;
    align-items: center;
    gap: 7px;
    margin-left: auto;
}

.gear .caret {
    border-width: 3px;
    border-bottom: none;
}

.toolbar {
    display: flex;
    align-items: center;
    height: 29px;
    padding: 0 0 2px 6px;
    border-bottom: 1px solid #aebfef;
    font-family: "Open Sans", sans-serif;
}

.toolbar button {
    display: flex;
    align-items: center;
    gap: 3px;
    margin-right: 20px;
}

.sep {
    width: 1px;
    height: 16px;
    background: #7fa4da;
}

.toolbar .sep {
    margin: 0 10px 0 -5px;
    border-left: 1px solid #7fa4da;
}

.toolbar .sep + button {
    margin-right: 23px;
}

.filters {
    display: flex;
    align-items: center;
    height: 35px;
    padding-left: 10px;
}

.f-status { width: 54px; }
.f-period { width: 48px; padding-left: 10px; }
.f-from { width: 48px; padding-left: 10px; }
.f-to { width: 40px; padding-left: 10px; }
.w-status { width: 128px; }
.w-period { width: 112px; }
.w-date { width: 88px; }

.field {
    position: relative;
    display: flex;
    align-items: center;
    height: 21px;
    border: 1px solid #8a9fe0;
    background: #fff;
}

.field input, .field select {
    flex: 1;
    width: 100%;
    min-width: 0;
    height: 17px;
    padding-left: 4px;
    outline: none;
    appearance: none;
}

.field select {
    padding-left: 3px;
}

.field.sel::after {
    content: "";
    flex: none;
    margin: 0 5px 0 4px;
    border: 4px solid transparent;
    border-top-color: #000;
    border-bottom: none;
}

.load {
    width: 75px;
    height: 22px;
    margin-left: 8px;
    border: 1px solid #8a9fe0;
    background: #c1cef9;
}

/* grids */
.grid {
    display: flex;
    flex-direction: column;
    flex: 1;
    min-height: 0;
    border: 1px solid #8a9fe0;
    background: #fff;
}

.grid-rows {
    position: relative;
    flex: 1;
    min-height: 0;
    overflow: hidden;
}

table {
    width: 100%;
    table-layout: fixed;
    border-collapse: separate;
    border-spacing: 0;
}

th {
    height: 19px;
    padding: 0;
    border-right: 1px solid #8a9fe0;
    border-bottom: 1px solid #8a9fe0;
    background: #c1cef9;
    font-weight: normal;
    overflow: hidden;
}

.th {
    display: flex;
    position: relative;
    justify-content: center;
    align-items: center;
    padding-right: 12px;
    white-space: nowrap;
}

.th svg {
    position: absolute;
    right: 1px;
}

.th.cut {
    justify-content: flex-end;
    padding-right: 46px;
    overflow: hidden;
}

.th.full {
    padding-right: 0;
}

td {
    height: 22px;
    padding: 0 4px 0 5px;
    border-right: 1px dotted #d8d8d8;
    border-bottom: 1px dotted #d8d8d8;
    white-space: nowrap;
    overflow: hidden;
}

.num {
    text-align: right;
    padding-right: 3px;
}

.date {
    text-align: right;
    padding-right: 22px;
}

tr.selected td {
    background: #fff2cb;
}

tr.new-row td {
    background: #ffffe1;
}

td.grey, tr.new-row td.grey {
    background: #efefef;
}

.frozen tbody td:first-child {
    border-right: 1px solid #777;
}

.op {
    display: flex;
    align-items: center;
    width: 16px;
    height: 20px;
    margin-left: -2px;
    border-right: 1px dotted #d8d8d8;
    font-style: normal;
    font-size: 14px;
}

.op b {
    width: 12px;
    height: 12px;
    border: 1px solid #2c2c66;
    background: #6464d8;
    box-shadow: inset 0 0 0 2px #fff;
}

.grid-foot {
    display: flex;
    flex: none;
    height: 23px;
    border-top: 1px solid #ddd;
    background: #efefef;
}

.grid-foot span {
    padding: 0 3px;
    border-right: 1px solid #ddd;
    line-height: 22px;
    white-space: nowrap;
}

.grid-foot span:last-child {
    border: none;
}

.grid-foot .frozen-edge {
    border-right-color: #777;
}

.c73 { width: 73px; }
.c75 { width: 75px; }
.c95 { width: 95px; }
.c99 { width: 99px; }
.c100 { width: 100px; }
.c103 { width: 103px; }
.c105 { width: 105px; }
.c110 { width: 110px; }
.c120 { width: 120px; }
.c129 { width: 129px; }
.c150 { width: 150px; }
.c245 { width: 245px; }
.c375 { width: 375px; }

.detail {
    display: flex;
    flex-direction: column;
    height: 243px;
}

.detail-tabs {
    padding-top: 8px;
    height: 27px;
}

.detail-tabs button {
    width: 61px;
    height: 19px;
    border: 1px solid #8a9fe0;
    border-bottom: none;
    background: #f5cc82;
    font-weight: bold;
}

/* status + taskbar */
.statusbar {
    display: flex;
    align-items: center;
    gap: 4px;
    height: 23px;
    padding: 0 13px 0 4px;
    background: #c1cef9;
}

.db {
    margin-left: 9px;
}

.edition {
    margin-left: auto;
}

.taskbar {
    display: flex;
    justify-content: space-between;
    height: 40px;
    background: linear-gradient(90deg, #1c2b31, #1f3036 60%, #2a4046 85%, #22343a);
    color: #fff;
    font-family: "Open Sans", sans-serif;
}

.tasks {
    display: flex;
}

.tasks button {
    display: flex;
    align-items: center;
    justify-content: center;
    width: 48px;
}

.tasks button.wide {
    width: 45px;
    margin-left: 4px;
}

.tasks .open {
    border-bottom: 2px solid #76b9ed;
}

.tasks .current {
    background: #4b5a60;
}

.tray {
    display: flex;
    align-items: center;
    gap: 8px;
    padding-right: 15px;
}

.clock {
    width: 76px;
    text-align: center;
    line-height: 18px;
}

.notif {
    position: relative;
    width: 25px;
}

.notif span {
    position: absolute;
    left: 8px;
    top: 7px;
    width: 16px;
    height: 16px;
    border: 1px solid #999;
    border-radius: 8px;
    background: #2b3338;
    line-height: 14px;
    text-align: center;
    font-weight: bold;
}

.chat {
    position: absolute;
    right: 36px;
    bottom: 40px;
    width: 50px;
    height: 48px;
    background: #fff;
}

.chat button {
    position: absolute;
    right: 2px;
    top: 0;
    width: 13px;
    height: 13px;
    border-radius: 7px;
    background: #fff;
    font-weight: bold;
    line-height: 13px;
}

/* voucher window */
.window {
    position: absolute;
    left: 502px;
    top: 150px;
    width: 916px;
    height: 739px;
    display: flex;
    flex-direction: column;
    border: 1px solid #5f6c98;
    border-top: none;
    background: #dae1fb;
    box-shadow: 0 1px 5px rgba(0, 0, 0, 0.3);
}

.win-title {
    display: flex;
    align-items: center;
    gap: 4px;
    height: 31px;
    padding: 0 4px 0 2px;
    background: #5f6c98;
    color: #fff;
    font-family: Roboto, sans-serif;
    font-size: 12px;
}

.win-title-btns {
    display: flex;
    gap: 9px;
    margin-left: auto;
}

.win-tools {
    display: flex;
    align-items: center;
    gap: 1px;
    height: 47px;
    padding-bottom: 2px;
    background: #c1cef9;
    font-family: "Open Sans", sans-serif;
}

.win-tools button {
    display: flex;
    flex-direction: column;
    align-items: center;
    gap: 5px;
    padding: 0 8px;
}

.win-tools button:disabled {
    color: #8a8d98;
}

.win-tools svg {
    width: 16px;
    height: 17px;
}

.win-tools .sep {
    width: 2px;
    height: 24px;
    margin: 4px 4px 0 0;
}

.win-tools .sep.tight {
    margin: 4px 3px 0;
}

.win-tools .caret {
    border-width: 3px;
    border-bottom: none;
}

.win-body {
    flex: 1;
    display: flex;
    flex-direction: column;
    min-height: 0;
    padding: 10px 8px 10px 4px;
}

.voucher-head {
    display: flex;
    align-items: center;
    padding-left: 5px;
}

.voucher-head h1 {
    width: 175px;
    margin: 0;
    font-family: "Open Sans", sans-serif;
    font-size: 16px;
    line-height: 20px;
}

.w-kind { width: 224px; }
.w-book { width: 148px; }

.push {
    margin: 0 3px 0 auto;
}

.groups {
    display: flex;
    gap: 10px;
    margin-top: 8px;
    padding: 0 1px 0 5px;
}

fieldset {
    min-width: 0;
    height: 143px;
    margin: 0;
    padding: 2px 7px 0 8px;
    border: 1px solid #8a9fe0;
}

legend {
    padding: 0 2px;
    margin-left: -3px;
    font-weight: bold;
    line-height: 14px;
}

.general {
    flex: 1;
}

.document {
    width: 202px;
    padding-right: 2px;
}

.row {
    display: flex;
    align-items: center;
    height: 21px;
    margin-bottom: 3px;
}

.row label, .lbl {
    width: 90px;
    padding-top: 2px;
}

.document label {
    width: 86px;
}

.grow {
    flex: 1;
}

.document .field input {
    padding-left: 3px;
}

.w-obj {
    width: 190px;
}

.second {
    margin-left: 5px;
}

.suffix {
    width: 74px;
    padding-left: 4px;
}

.plus {
    flex: none;
    width: 10px;
    height: 10px;
    margin-right: 7px;
    background:
        linear-gradient(#33418c, #33418c) center / 100% 2px no-repeat,
        linear-gradient(#33418c, #33418c) center / 2px 100% no-repeat;
}

.clock-ic {
    margin-right: 4px;
}

.lookup {
    display: flex;
    align-items: center;
    justify-content: center;
    width: 23px;
    height: 23px;
    margin-left: auto;
    border: 1px solid #8a9fe0;
    background: #c1cef9;
}

.collapse {
    align-self: center;
    display: flex;
    align-items: center;
    justify-content: center;
    width: 50px;
    height: 8px;
    margin: 2px 0 0 4px;
    border: 1px solid #8a9fe0;
}

.collapse i {
    border: 3px solid transparent;
    border-bottom-color: #444;
    border-top: none;
}

.win-tabs {
    display: flex;
    margin-top: 11px;
}

.win-tabs button {
    width: 86px;
    height: 19px;
    border: 1px solid #8a9fe0;
    border-bottom: none;
}

.win-tabs .active {
    background: #f5cc82;
    font-weight: bold;
}

td.editing {
    padding: 0;
}

.edit-cell {
    display: flex;
    align-items: center;
    height: 21px;
    padding-left: 3px;
}

.edit-cell mark {
    margin-left: 7px;
    background: #0a78d7;
    color: #fff;
    line-height: 14px;
}

.edit-cell button {
    display: flex;
    align-items: center;
    justify-content: center;
    width: 18px;
    height: 21px;
    margin-left: auto;
    background: #ffe29a;
}

td.hint {
    padding-left: 3px;
    overflow: visible;
}

.error-tip {
    position: absolute;
    left: 6px;
    top: 60px;
    width: 799px;
    padding-left: 3px;
    border: 1px solid #555;
    background: #ffffe1;
    line-height: 16px;
    white-space: nowrap;
}

.hscroll {
    display: flex;
    height: 18px;
    border-top: 1px solid #ddd;
    background: #efefef;
}

.hscroll button {
    display: flex;
    align-items: center;
    justify-content: center;
    width: 17px;
    background: #c1cef9;
}

.hscroll button::before {
    content: "";
    border: 4px solid transparent;
}

.hscroll .left::before {
    border-right-color: #000;
    border-left: none;
}

.hscroll .right {
    margin-left: auto;
}

.hscroll .right::before {
    border-left-color: #000;
    border-right: none;
}

.thumb {
    width: 39.4%;
    margin-left: 49.2%;
    background: #c1cef9;
}

.win-status {
    position: relative;
    height: 24px;
    padding-left: 4px;
    background: #c1cef9;
    line-height: 24px;
}

.grip {
    position: absolute;
    right: 1px;
    bottom: 1px;
    width: 12px;
    height: 12px;
    background: radial-gradient(#4a5a94 1px, transparent 1px) 0 0 / 4px 4px;
    clip-path: polygon(100% 0, 100% 100%, 0 100%);
}
```

FILE: script.js
```
// pad every grid with empty rows, so the lines run down to the footer
document.querySelectorAll("table[data-fill]").forEach(function (table) {
    const cols = table.querySelectorAll("col").length;
    const grey = table.dataset.grey;
    const body = table.querySelector("tbody");

    for (let r = 0; r < Number(table.dataset.fill); r++) {
        const tr = body.insertRow();
        for (let c = 0; c < cols; c++) {
            const td = tr.insertCell();
            if (String(c) === grey) {
                td.className = "grey";
            }
        }
    }
});
```
